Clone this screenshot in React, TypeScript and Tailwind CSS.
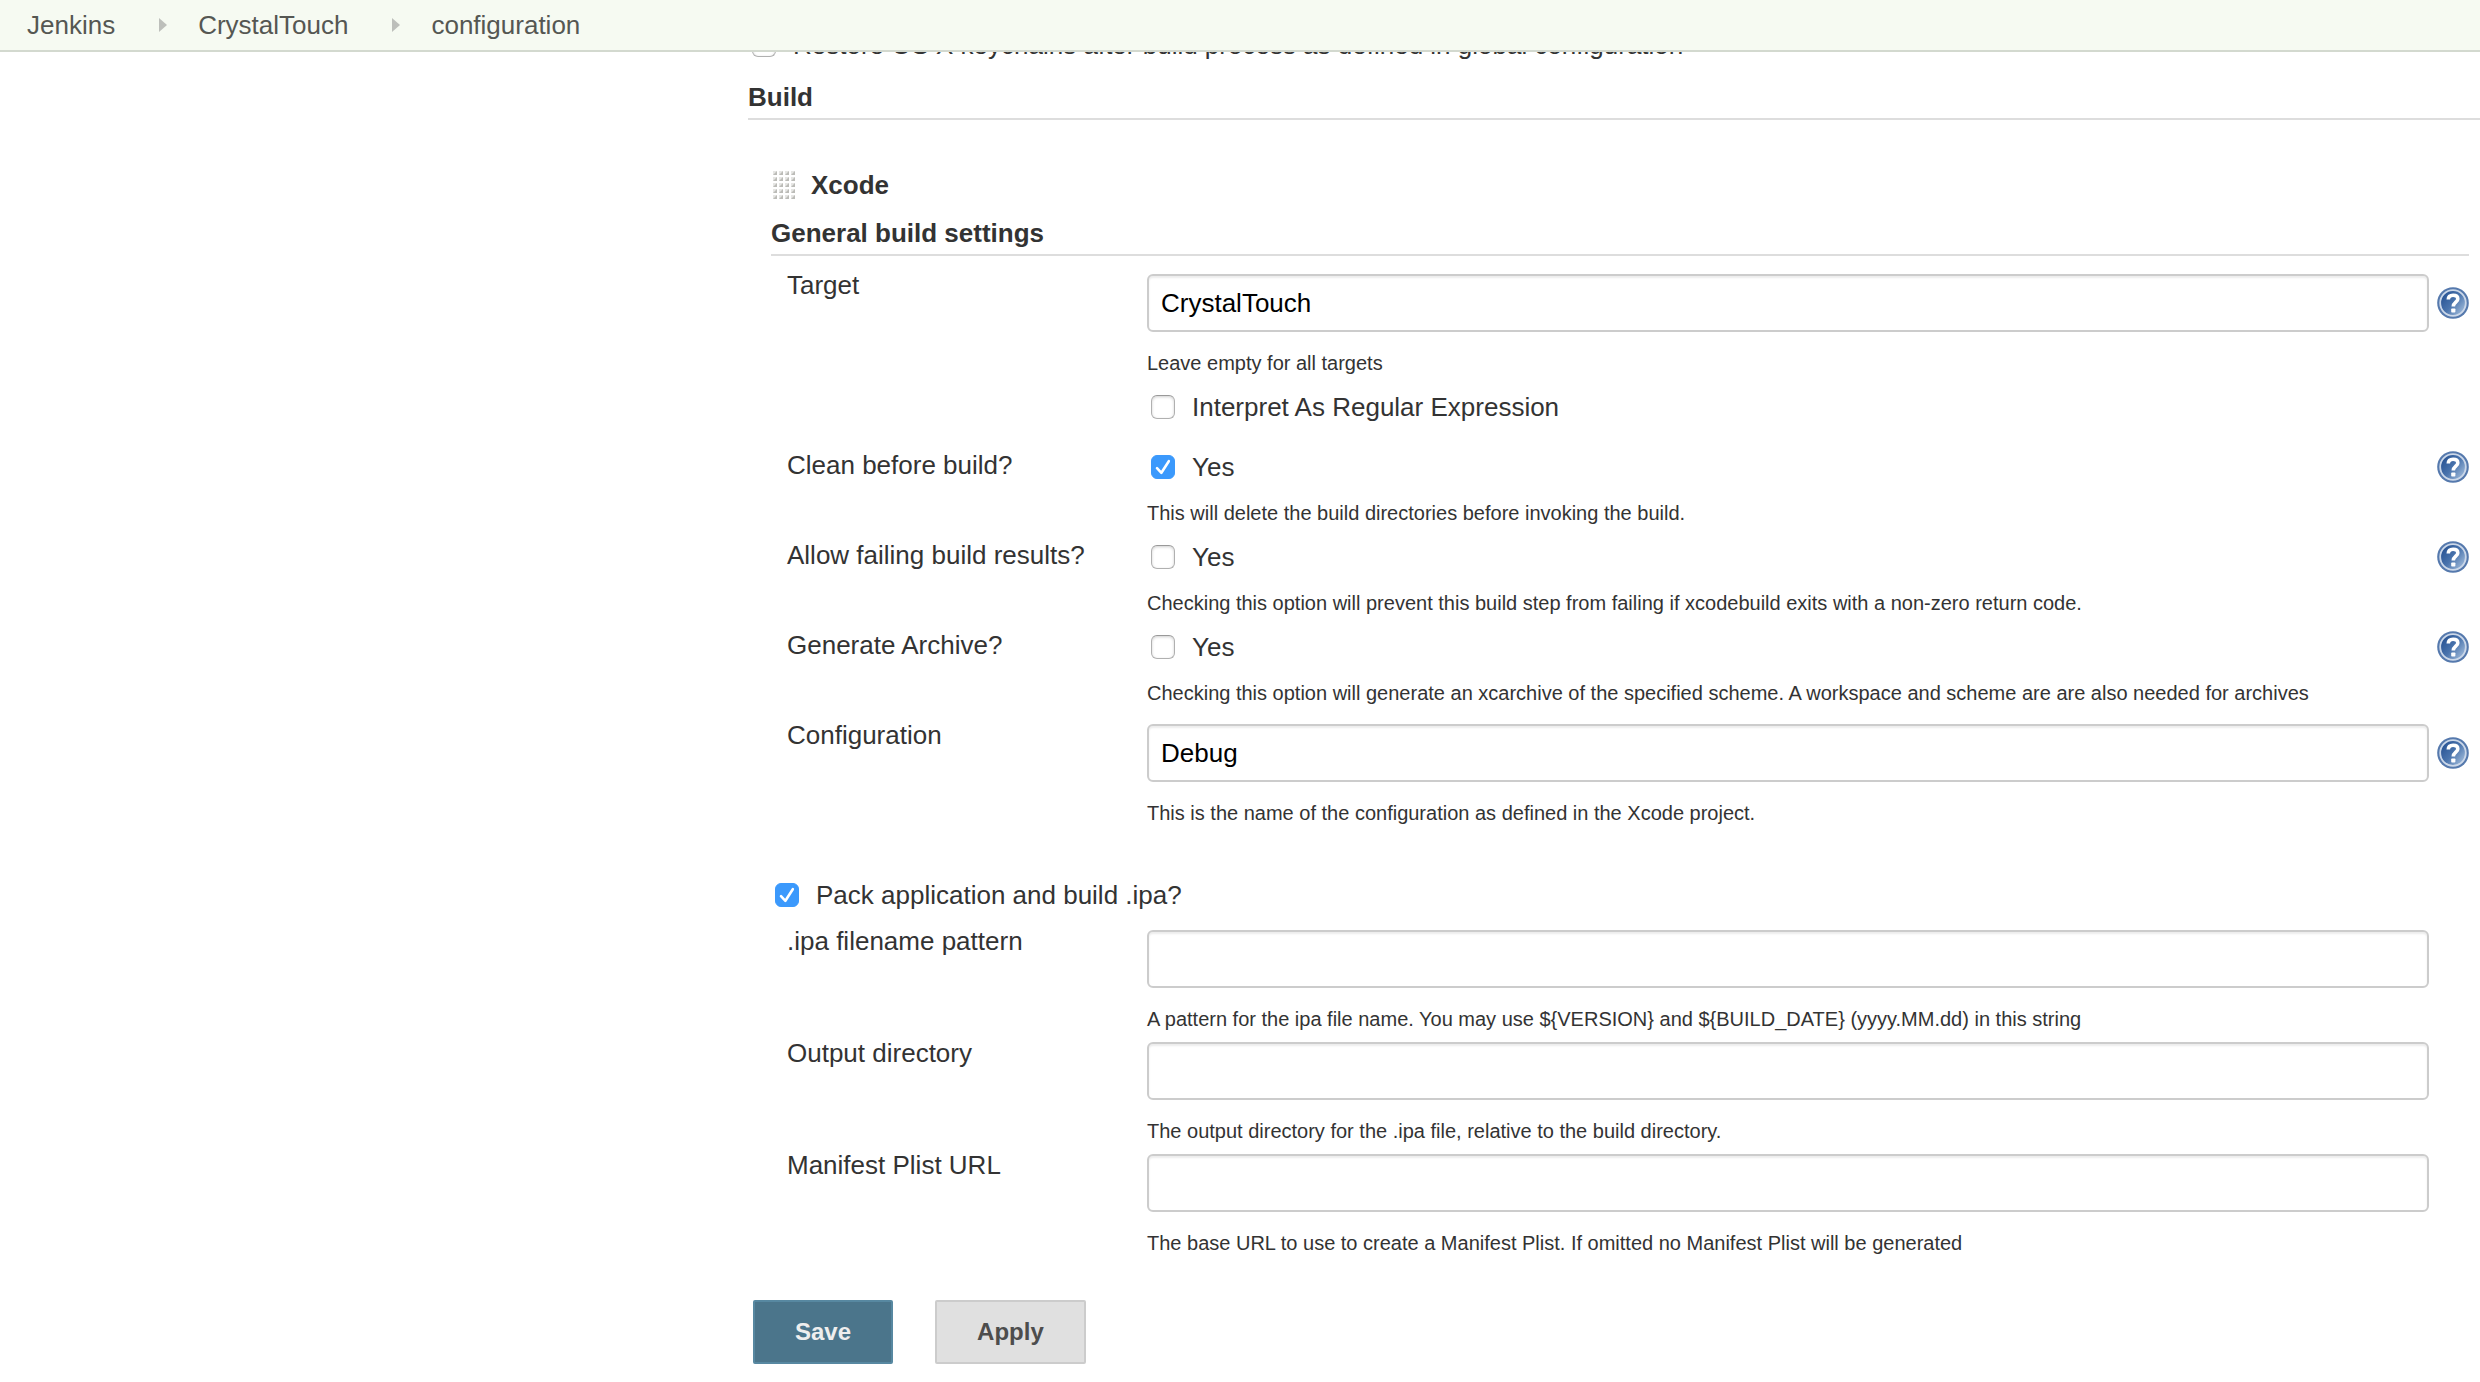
import React from "react";

function HelpIcon() {
  return (
    <svg viewBox="0 0 32 32" className="size-8" aria-hidden="true">
      <defs>
        <linearGradient id="help-fill" x1="0" y1="0.1" x2="1" y2="0.9">
          <stop offset="0.1" stopColor="#2a5595" />
          <stop offset="0.5" stopColor="#4a74ad" />
          <stop offset="0.95" stopColor="#a3bddc" />
        </linearGradient>
      </defs>
      <circle cx="16" cy="16" r="15.8" fill="#5579ad" />
      <circle cx="16" cy="16" r="12.8" fill="url(#help-fill)" stroke="#ccd8e9" strokeWidth="1.8" />
      <path
        d="M11.3 12.6C11.3 9.6 13.2 8.3 16.1 8.3C19 8.3 20.8 9.7 20.8 11.9C20.8 15.2 16.3 15.2 16.3 19.6"
        fill="none"
        stroke="#fff"
        strokeWidth="3.6"
      />
      <rect x="14.2" y="21.4" width="4.2" height="4.2" rx="0.8" fill="#fff" />
    </svg>
  );
}

function HelpButton({ topic }: { topic: string }) {
  return (
    <button type="button" aria-label={`Help for ${topic}`} className="size-8 shrink-0 cursor-pointer">
      <HelpIcon />
    </button>
  );
}

function Checkbox({ id, label, checked = false }: { id: string; label: string; checked?: boolean }) {
  return (
    <div className="flex h-8 items-center gap-[17px] pl-1">
      <span className="relative block size-6 shrink-0">
        <input
          id={id}
          type="checkbox"
          defaultChecked={checked}
          className="peer block size-6 appearance-none rounded-md border border-[#b0b0b0] border-t-[#999] bg-white shadow-[inset_0_1px_3px_#d0d0d0] checked:border-[#3b99fc] checked:bg-[#3b99fc] checked:shadow-none"
        />
        <svg
          viewBox="0 0 24 24"
          className="pointer-events-none absolute inset-0 hidden size-6 peer-checked:block"
          aria-hidden="true"
        >
          <path d="M6 13.2L10.4 17.8L17.8 6.2" fill="none" stroke="#fff" strokeWidth="2.6" strokeLinecap="round" strokeLinejoin="round" />
        </svg>
      </span>
      <label htmlFor={id} className="whitespace-nowrap">
        {label}
      </label>
    </div>
  );
}

function Row({ label, htmlFor, children }: { label: string; htmlFor: string; children: React.ReactNode }) {
  return (
    <div className="grid grid-cols-[360px_1fr] pl-4">
      <label htmlFor={htmlFor}>{label}</label>
      <div>{children}</div>
    </div>
  );
}

function TextRow({
  id,
  label,
  value = "",
  note,
  help = false,
}: {
  id: string;
  label: string;
  value?: string;
  note: string;
  help?: boolean;
}) {
  return (
    <Row label={label} htmlFor={id}>
      <div className="mt-[5px] flex items-center gap-2">
        <input
          id={id}
          type="text"
          defaultValue={value}
          className="h-[58px] min-w-0 flex-1 rounded-md border-2 border-[#ccc] bg-white px-3 text-black shadow-[inset_0_2px_2px_#ececec]"
        />
        {help ? <HelpButton topic={label} /> : <span className="w-8 shrink-0" />}
      </div>
      <p className="mt-[19px] text-[20px] leading-6">{note}</p>
    </Row>
  );
}

function CheckRow({ id, label, note, checked }: { id: string; label: string; note: string; checked?: boolean }) {
  return (
    <Row label={label} htmlFor={id}>
      <div className="flex items-center justify-between pt-[2px]">
        <Checkbox id={id} label="Yes" checked={checked} />
        <HelpButton topic={label} />
      </div>
      <p className="mt-[18px] text-[20px] leading-6">{note}</p>
    </Row>
  );
}

function Grip() {
  const columns = [0, 6, 12, 18];
  const rows = [0, 6, 12, 18, 24];
  return (
    <svg viewBox="0 0 22 28" className="ml-[2px] h-7 w-[22px]" aria-hidden="true">
      {rows.map((y) =>
        columns.map((x) => (
          <g key={`${x}-${y}`}>
            <rect x={x} y={y} width="4" height="4" fill="#e6e6e4" />
            <path d={`M${x + 4} ${y}V${y + 4}H${x}Z`} fill="#bcbcb8" />
          </g>
        )),
      )}
    </svg>
  );
}

function Arrow() {
  return (
    <svg viewBox="0 0 8 14" className="mr-[31px] ml-11 h-[14px] w-2" aria-hidden="true">
      <path d="M0 0L8 7L0 14Z" fill="#bdbfbb" />
    </svg>
  );
}

export default function App() {
  return (
    <div className="min-h-screen overflow-hidden bg-white font-['Liberation_Sans',Arial,sans-serif] text-[26px] leading-8 text-[#333]">
      <header className="relative z-10 border-b-2 border-[#d3d9cf] bg-[#f6faf2]">
        <nav aria-label="Breadcrumb" className="flex h-[50px] items-center pl-[27px] text-[#555753]">
          <ol className="flex items-center">
            <li className="flex items-center">
              <a href="#jenkins">Jenkins</a>
              <Arrow />
            </li>
            <li className="flex items-center">
              <a href="#crystaltouch">CrystalTouch</a>
              <Arrow />
            </li>
            <li>
              <a href="#configuration">configuration</a>
            </li>
          </ol>
        </nav>
      </header>

      <form className="ml-[748px]" onSubmit={(event) => event.preventDefault()}>
        <div className="-mt-[23px]">
          <Checkbox id="keychains" label="Restore OS X keychains after build process as defined in global configuration" />
        </div>
        <h2 className="mt-5 border-b-2 border-[#ddd] pb-[5px] font-bold">Build</h2>

        <div className="mr-[11px] ml-[23px]">
          <h3 className="mt-[49px] flex items-center gap-4 font-bold">
            <Grip />
            Xcode
          </h3>
          <h3 className="mt-4 border-b-2 border-[#ddd] pb-[5px] font-bold">General build settings</h3>

          <div className="mt-[13px]">
            <TextRow id="target" label="Target" value="CrystalTouch" note="Leave empty for all targets" help />
          </div>
          <div className="mt-4 pl-[376px]">
            <Checkbox id="regex" label="Interpret As Regular Expression" />
          </div>
          <div className="mt-[26px] flex flex-col gap-[14px]">
            <CheckRow
              id="clean"
              label="Clean before build?"
              note="This will delete the build directories before invoking the build."
              checked
            />
            <CheckRow
              id="failing"
              label="Allow failing build results?"
              note="Checking this option will prevent this build step from failing if xcodebuild exits with a non-zero return code."
            />
            <CheckRow
              id="archive"
              label="Generate Archive?"
              note="Checking this option will generate an xcarchive of the specified scheme. A workspace and scheme are are also needed for archives"
            />
            <TextRow
              id="configuration"
              label="Configuration"
              value="Debug"
              note="This is the name of the configuration as defined in the Xcode project."
              help
            />
          </div>

          <div className="mt-[54px] mb-[14px]">
            <Checkbox id="pack" label="Pack application and build .ipa?" checked />
          </div>
          <div className="flex flex-col gap-[6px]">
            <TextRow
              id="pattern"
              label=".ipa filename pattern"
              note="A pattern for the ipa file name. You may use ${VERSION} and ${BUILD_DATE} (yyyy.MM.dd) in this string"
            />
            <TextRow
              id="output"
              label="Output directory"
              note="The output directory for the .ipa file, relative to the build directory."
            />
            <TextRow
              id="manifest"
              label="Manifest Plist URL"
              note="The base URL to use to create a Manifest Plist. If omitted no Manifest Plist will be generated"
            />
          </div>
        </div>

        <div className="mt-[45px] ml-[5px] flex gap-[42px] pb-4 text-[24px] font-bold">
          <button type="submit" className="h-16 rounded-xs border-2 border-[#5788a1] bg-[#4b758b] px-10 text-[#eee]">
            Save
          </button>
          <button type="button" className="h-16 rounded-xs border-2 border-[#ccc] bg-[#e0e0e0] px-10 text-[#4d4d4d]">
            Apply
          </button>
        </div>
      </form>
    </div>
  );
}
